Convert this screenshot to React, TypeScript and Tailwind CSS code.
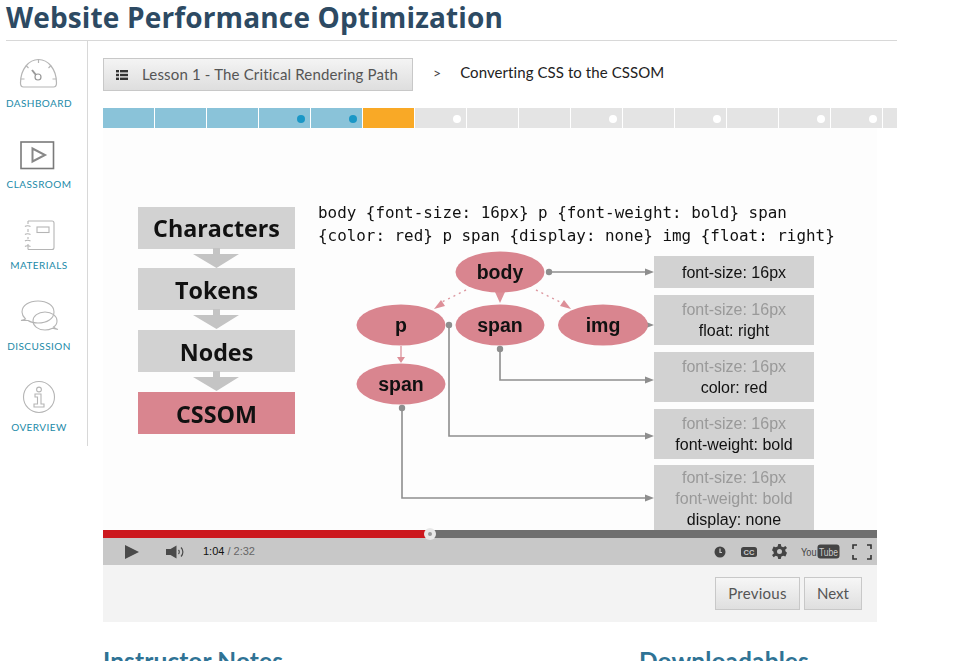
import React from "react";

const labelCls = "text-[10px] leading-[14px] tracking-[0.45px] text-[#1b8aa8] font-['Lato',sans-serif]";

function Gauge() {
  return (
    <svg width="44" height="36" viewBox="0 0 44 36" fill="none" stroke="#b5b5b5" strokeWidth="1.2">
      <path d="M6.5 31H36.5C38.5 31 39.5 30 39.5 27C39.5 13 31 3.5 21.5 3.5C12 3.5 3.5 13 3.5 27C3.5 30 4.5 31 6.5 31Z" />
      <path d="M21.5 3.5V7M9 9.5L11.5 12M34 9.5L31.5 12M4 23H7.5M39 23H35.5" />
      <circle cx="21" cy="21" r="3" stroke="#999" />
      <path d="M15 14L19 19" stroke="#999" strokeWidth="2" />
    </svg>
  );
}
function Play() {
  return (
    <svg width="44" height="36" viewBox="0 0 44 36" fill="none" stroke="#7a7a7a">
      <rect x="4" y="5" width="32.5" height="26.5" strokeWidth="1.6" />
      <path d="M15.5 11.5L28 18L15.5 24.5Z" stroke="#888" strokeWidth="2" />
    </svg>
  );
}
function Notebook() {
  return (
    <svg width="44" height="36" viewBox="0 0 44 36" fill="none" stroke="#b5b5b5" strokeWidth="1.1">
      <path d="M11 3H35C36.5 3 37 3.5 37 5V29.5C37 31 36.5 31.5 35 31.5H11" />
      <path d="M11 3V6M11 11V14M11 19V21M11 26V31.5" />
      <path d="M8 8.5C9 7.500 12 7.500 13.5 8.500M8 16.500C9 15.500 12 15.500 13.5 16.500M8 23C9 22 12 22 13.5 23M8 28.500C9 27.500 12 27.500 13.5 28.500" />
      <rect x="20" y="9" width="12" height="5.500" />
    </svg>
  );
}
function Bubbles() {
  return (
    <svg width="44" height="36" viewBox="0 0 44 36" fill="none" stroke="#b5b5b5" strokeWidth="1.1">
      <path d="M8.5 20C6.5 18 5 16 5 13C5 6.5 12 2 21 2C30 2 37 6.5 37 13C37 19.5 30 24 21 24C17 24 14 23.5 11 21.5C9 21.5 6 21.5 4 21.5C5.5 21 7.5 20.5 8.5 20Z" />
      <path d="M36.5 28C39 26.5 40 24.5 40 22C40 17 35 13 28 13C21 13 16 17 16 22C16 27 21 31 28 31C31 31 33.5 30.2 35.5 29.2C37 29.5 39 30 41 30.5C39 30 37.5 29 36.5 28Z" />
    </svg>
  );
}
function Info() {
  return (
    <svg width="44" height="36" viewBox="0 0 44 36" fill="none" stroke="#b5b5b5" strokeWidth="1.1">
      <circle cx="22" cy="17" r="15.5" />
      <circle cx="22" cy="9.5" r="2.4" />
      <path d="M18 14H24V24H27V27H17V24H20.5V17H18Z" />
    </svg>
  );
}

const nav = [
  { label: "DASHBOARD", icon: <Gauge /> },
  { label: "CLASSROOM", icon: <Play /> },
  { label: "MATERIALS", icon: <Notebook /> },
  { label: "DISCUSSION", icon: <Bubbles /> },
  { label: "OVERVIEW", icon: <Info /> },
];

type Seg = { w: number; c: string; dot?: string };
const segs: Seg[] = [
  { w: 51, c: "#8ac3d9" },
  { w: 51, c: "#8ac3d9" },
  { w: 51, c: "#8ac3d9" },
  { w: 51, c: "#8ac3d9", dot: "#1a97c6" },
  { w: 51, c: "#8ac3d9", dot: "#1a97c6" },
  { w: 51, c: "#f9a926" },
  { w: 51, c: "#e4e4e4", dot: "#ffffff" },
  { w: 51, c: "#e4e4e4" },
  { w: 51, c: "#e4e4e4" },
  { w: 51, c: "#e4e4e4", dot: "#ffffff" },
  { w: 51, c: "#e4e4e4" },
  { w: 51, c: "#e4e4e4", dot: "#ffffff" },
  { w: 51, c: "#e4e4e4" },
  { w: 51, c: "#e4e4e4", dot: "#ffffff" },
  { w: 51, c: "#e4e4e4", dot: "#ffffff" },
  { w: 14, c: "#e4e4e4" },
];

function Slide() {
  const sans = "'Liberation Sans', sans-serif";
  const open = "'Open Sans', sans-serif";
  const grey = "#d2d2d2";
  const line = "#8e8e8e";
  const pink = "#d9858f";
  const stack = [
    { y: 207, t: "Characters", f: grey, b: 237 },
    { y: 268, t: "Tokens", f: grey, b: 299 },
    { y: 330, t: "Nodes", f: grey, b: 361 },
    { y: 392, t: "CSSOM", f: pink, b: 423 },
  ];
  const ellipses = [
    { x: 500, y: 272, t: "body" },
    { x: 401, y: 325, t: "p" },
    { x: 500, y: 325, t: "span" },
    { x: 603, y: 325, t: "img" },
    { x: 401, y: 384, t: "span" },
  ];
  const boxes: { y: number; h: number; first: number; lines: [string, boolean][] }[] = [
    { y: 256, h: 32, first: 278, lines: [["font-size: 16px", false]] },
    { y: 295, h: 50, first: 315, lines: [["font-size: 16px", true], ["float: right", false]] },
    { y: 352, h: 50, first: 372, lines: [["font-size: 16px", true], ["color: red", false]] },
    { y: 409, h: 50, first: 429, lines: [["font-size: 16px", true], ["font-weight: bold", false]] },
    { y: 465, h: 70, first: 483, lines: [["font-size: 16px", true], ["font-weight: bold", true], ["display: none", false]] },
  ];
  const heads = [272, 325, 380, 436, 498];
  return (
    <svg className="block w-[774px] h-[402px] blur-[0.35px]" viewBox="103 128 774 402">
      <rect x="103" y="128" width="774" height="402" fill="#fdfdfd" />
      {stack.map((s, i) => (
        <g key={s.t}>
          <rect x="138" y={s.y} width="157" height="42" fill={s.f} />
          {i < 3 && (
            <path
              d={`M213 ${s.y + 41}H220V${s.y + 47}H239L216.500 ${s.y + 61}L193 ${s.y + 47}H213Z`}
              fill="#c4c4c4"
            />
          )}
          <text x="216.500" y={s.b} textAnchor="middle" fontFamily={open} fontWeight="700" fontSize="23.300" fill="#111">
            {s.t}
          </text>
        </g>
      ))}
      <g fontFamily="'DejaVu Sans Mono', monospace" fontSize="15.9" fill="#111">
        <text x="318" y="218">body {"{"}font-size: 16px{"}"} p {"{"}font-weight: bold{"}"} span</text>
        <text x="318" y="241">{"{"}color: red{"}"} p span {"{"}display: none{"}"} img {"{"}float: right{"}"}</text>
      </g>
      {boxes.map((b) => (
        <g key={b.y}>
          <rect x="654" y={b.y} width="160" height={b.h} fill={grey} />
          {b.lines.map(([t, faded], i) => (
            <text
              key={i}
              x="734"
              y={b.first + i * 21}
              textAnchor="middle"
              fontFamily={sans}
              fontSize="16"
              fill={faded ? "#999" : "#111"}
            >
              {t}
            </text>
          ))}
        </g>
      ))}
      <g fill="none" stroke={line} strokeWidth="1.6">
        <path d="M549 272H647" />
        <path d="M500 349V380H647" />
        <path d="M449 325V436H647" />
        <path d="M402 408V498H647" />
        <path d="M648 325H650" />
      </g>
      <g fill={line}>
        {heads.map((y) => (
          <path key={y} d={`M645 ${y - 3.500}L654 ${y}L645 ${y + 3.500}Z`} />
        ))}
        <circle cx="549" cy="272" r="3.200" />
        <circle cx="500" cy="349" r="3.200" />
        <circle cx="449" cy="325" r="3.200" />
        <circle cx="402" cy="408" r="3.200" />
      </g>
      <g fill="none" stroke="#dd9aa2" strokeWidth="1.4">
        <path d="M466 290L442 302" strokeDasharray="2 4" />
        <path d="M536 290L560 302" strokeDasharray="2 4" />
        <path d="M401 346V358" />
      </g>
      <g fill="#dd8f98">
        <path d="M434 309L441 300L445 306Z" />
        <path d="M571 309L564 300L560 306Z" />
        <path d="M397 357H405L401 363Z" />
        <path d="M495 292H505L500 303Z" />
      </g>
      {ellipses.map((e, i) => (
        <g key={i}>
          <ellipse cx={e.x} cy={e.y} rx={i === 3 ? 45 : 44.500} ry="20.500" fill={pink} />
          <text x={e.x} y={e.y + 6.500} textAnchor="middle" fontFamily={sans} fontWeight="700" fontSize="19.500" fill="#111">
            {e.t}
          </text>
        </g>
      ))}
    </svg>
  );
}

function Controls() {
  return (
    <div className="relative">
      <div className="flex h-[8px] bg-[#6f6f6f]">
        <div className="w-[325px] bg-[#cc181e]" />
      </div>
      <div className="absolute left-[321px] top-[-2px] w-[12px] h-[12px] rounded-full bg-[#e8e8e8] flex items-center justify-center">
        <div className="w-[4px] h-[4px] rounded-full bg-[#999]" />
      </div>
      <div className="flex items-center h-[27px] bg-[#c8c8c8]">
        <svg className="ml-[22px]" width="14" height="14" viewBox="0 0 14 14">
          <path d="M0 0L14 7L0 14Z" fill="#4a4a4a" />
        </svg>
        <svg className="ml-[27px]" width="19" height="14" viewBox="0 0 19 14" fill="none">
          <path d="M0 4H4.500L10.500 0.500V13.500L4.500 10H0Z" fill="#4a4a4a" />
          <path d="M12.500 5C13.500 6 13.500 8 12.500 9M15 2.500C17.500 5 17.500 9 15 11.500" stroke="#4a4a4a" strokeWidth="1.200" />
        </svg>
        <span className="ml-[18px] text-[11px] font-['Liberation_Sans',sans-serif] text-[#111]">
          1:04 <span className="text-[#666]">/ 2:32</span>
        </span>
        <div className="ml-auto mr-[5px] flex items-center">
          <svg width="12" height="12" viewBox="0 0 12 12">
            <circle cx="6" cy="6" r="5.500" fill="#444" />
            <path d="M6 2.500V6.500H8" stroke="#ccc" strokeWidth="1.200" fill="none" />
          </svg>
          <svg className="ml-[15px]" width="16" height="10" viewBox="0 0 16 10">
            <rect width="16" height="10" rx="2.500" fill="#444" />
            <text x="8" y="8" textAnchor="middle" fontSize="7.500" fontWeight="700" fontFamily="'Liberation Sans', sans-serif" fill="#ccc">CC</text>
          </svg>
          <svg className="ml-[15px]" width="15" height="15" viewBox="0 0 24 24">
            <path
              fill="#444"
              fillRule="evenodd"
              d="M10 0H14L15 4L18 5.300L21.500 3L24 6.500L21 9L21.800 12L24 14L21.500 20L18 18.800L15 20L14 24H10L9 20L6 18.800L2.500 21L0 17.500L3 15L2.200 12L0 10L2.500 4L6 5.300L9 4ZM12 8A4 4 0 1 0 12 16A4 4 0 1 0 12 8Z"
            />
          </svg>
          <svg className="ml-[14px]" width="39" height="15" viewBox="0 0 39 15">
            <text x="0" y="12" fontSize="11" textLength="15.500" lengthAdjust="spacingAndGlyphs" fontFamily="'Liberation Sans', sans-serif" fill="#444">You</text>
            <rect x="16.500" y="0.500" width="22" height="14" rx="3" fill="#444" />
            <text x="18" y="12" fontSize="11" textLength="19" lengthAdjust="spacingAndGlyphs" fontFamily="'Liberation Sans', sans-serif" fill="#ccc">Tube</text>
          </svg>
          <svg className="ml-[12px]" width="20" height="16" viewBox="0 0 20 16" fill="none" stroke="#333" strokeWidth="1.600">
            <path d="M1 5V1H5M15 1H19V5M19 11V15H15M5 15H1V11" />
          </svg>
        </div>
      </div>
    </div>
  );
}

export default function App() {
  const btn = "h-[33px] border border-[#c8c8c8] bg-gradient-to-b from-[#f6f6f6] to-[#dfdfdf] text-[#555] font-['Lato',sans-serif]";
  return (
    <div className="relative h-[661px] w-[960px] overflow-hidden bg-white font-['Lato',sans-serif]">
      <div className="ml-[6px] w-[891px]">
        <h1 className="h-[41px] border-b border-[#d8d8d8] text-[28px] leading-[34px] font-bold tracking-[0.15px] text-[#2d4a63] font-['Open_Sans',sans-serif]">
          Website Performance Optimization
        </h1>
        <div className="flex">
          <aside className="w-[82px] h-[405px] shrink-0 border-r border-[#d8d8d8] pr-[15px]">
            {nav.map((n) => (
              <div key={n.label} className="h-[81px] pt-[15px] flex flex-col items-center">
                <div className="h-[36px]">{n.icon}</div>
                <div className={`mt-[4px] ${labelCls}`}>{n.label}</div>
              </div>
            ))}
          </aside>
          <main className="pl-[15px] pt-[17px] w-[809px]">
            <div className="flex items-center h-[33px]">
              <button className="w-[310px] h-[33px] flex items-center border border-[#c8c8c8] bg-gradient-to-b from-[#f4f4f4] to-[#dedede] pl-[12px] text-[15px] tracking-[0.17px] text-[#555]">
                <svg width="12" height="10" viewBox="0 0 12 10" fill="#333">
                  <rect x="0" y="0" width="3" height="2.400" />
                  <rect x="4" y="0" width="8" height="2.400" />
                  <rect x="0" y="3.800" width="3" height="2.400" />
                  <rect x="4" y="3.800" width="8" height="2.400" />
                  <rect x="0" y="7.600" width="3" height="2.400" />
                  <rect x="4" y="7.600" width="8" height="2.400" />
                </svg>
                <span className="ml-[14px]">Lesson 1 - The Critical Rendering Path</span>
              </button>
              <span className="ml-[20px] pb-[5px] text-[14px] text-[#444]">&gt;</span>
              <span className="ml-[19px] pb-[4px] text-[15px] tracking-[0.08px] text-[#222]">Converting CSS to the CSSOM</span>
            </div>
            <div className="flex mt-[17px] h-[20px]">
              {segs.map((s, i) => (
                <div
                  key={i}
                  className="relative h-[20px] mr-px last:mr-0 shrink-0"
                  style={{ width: s.w, background: s.c }}
                >
                  {s.dot && (
                    <div
                      className="absolute left-[38px] top-[6.500px] w-[8px] h-[8px] rounded-full"
                      style={{ background: s.dot }}
                    />
                  )}
                </div>
              ))}
            </div>
            <div className="w-[774px]">
              <Slide />
              <Controls />
              <div className="h-[57px] bg-[#f3f3f3] flex justify-end gap-[4px] pt-[12px] pr-[15px]">
                <button className={`${btn} w-[85px] text-[15px] tracking-[0.25px]`}>Previous</button>
                <button className={`${btn} w-[58px] text-[15px]`}>Next</button>
              </div>
            </div>
            <div className="flex mt-[24px]">
              <h2 className="w-[536px] text-[24.5px] leading-[30px] font-bold tracking-[0.1px] text-[#2f7395]">Instructor Notes</h2>
              <h2 className="text-[24.5px] leading-[30px] font-bold tracking-[0.1px] text-[#2f7395]">Downloadables</h2>
            </div>
          </main>
        </div>
      </div>
    </div>
  );
}
